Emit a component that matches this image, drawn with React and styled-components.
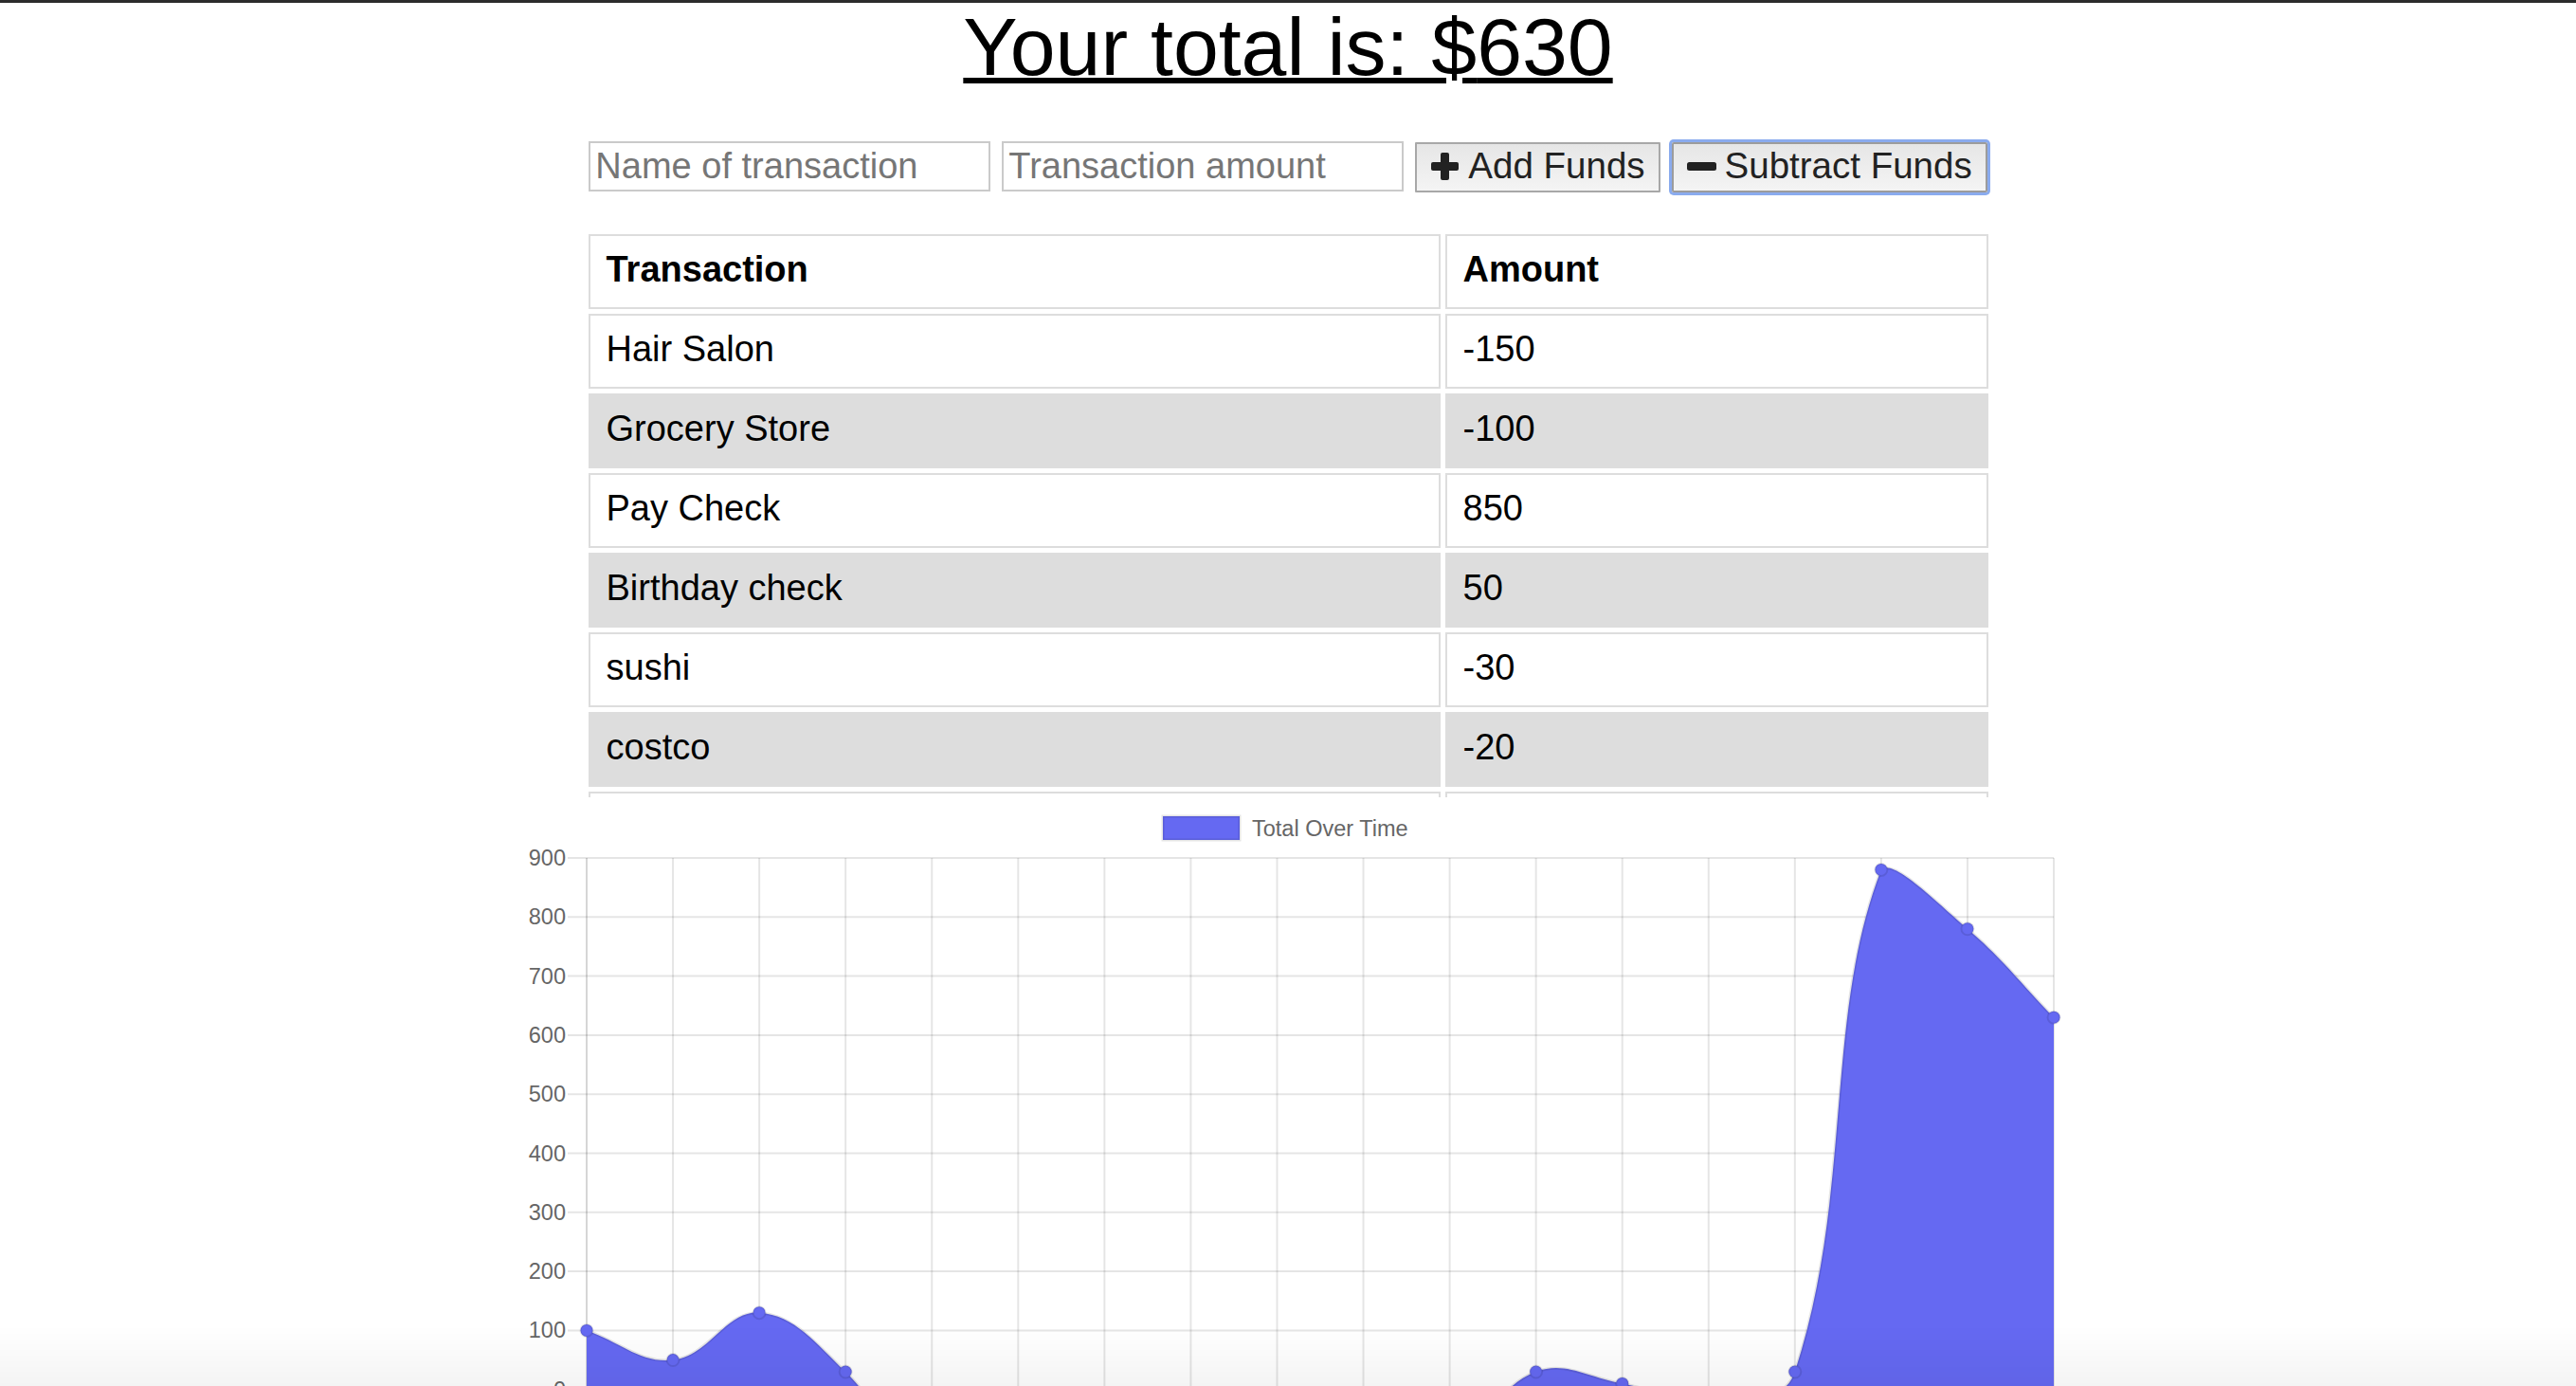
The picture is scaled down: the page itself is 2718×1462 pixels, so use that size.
import React from "react";
import styled, { createGlobalStyle, css } from "styled-components";

// Transactions, newest first (same order the table shows them)
const transactions = [
  { name: "Hair Salon", value: -150 },
  { name: "Grocery Store", value: -100 },
  { name: "Pay Check", value: 850 },
  { name: "Birthday check", value: 50 },
  { name: "sushi", value: -30 },
  { name: "costco", value: -20 },
  { name: "refund", value: 130 },
  { name: "cash back", value: 40 },
  { name: "dinner", value: -50 },
  { name: "tutoring", value: 90 },
  { name: "gift", value: 20 },
  { name: "shoes", value: -80 },
  { name: "sold books", value: 30 },
  { name: "car repair", value: -180 },
  { name: "electric bill", value: -100 },
  { name: "side job", value: 80 },
  { name: "movies", value: -50 },
  { name: "deposit", value: 100 },
];

const total = transactions.reduce((sum, t) => sum + t.value, 0);

// running totals, oldest first, for the chart
const runningTotals = [...transactions].reverse().reduce((acc, t) => {
  const prev = acc.length ? acc[acc.length - 1] : 0;
  acc.push(prev + t.value);
  return acc;
}, []);

// chart geometry (svg coordinates)
const chart = {
  width: 1640,
  height: 621,
  left: 80,
  right: 1628,
  top: 64,
  max: 900,
  perUnit: 0.623,
};
const yOf = (v) => chart.top + (chart.max - v) * chart.perUnit;
const area = { left: chart.left, right: chart.right, top: chart.top, bottom: yOf(-300) };

const FONT = `"Liberation Sans", Arial, Helvetica, sans-serif`;

const GlobalStyle = createGlobalStyle`
  html, body {
    margin: 0;
    padding: 0;
    background: #fff;
    overflow: hidden;
  }
  body {
    font-family: ${FONT};
    color: #000;
  }
`;

const TopEdge = styled.div`
  position: fixed;
  top: 0;
  left: 0;
  right: 0;
  height: 3px;
  background: #2c2c2c;
  z-index: 2;
`;

const BottomShade = styled.div`
  position: fixed;
  left: 0;
  right: 0;
  bottom: 0;
  height: 64px;
  background: linear-gradient(rgba(0, 0, 0, 0), rgba(0, 0, 0, 0.045));
  pointer-events: none;
  z-index: 2;
`;

const Page = styled.div`
  height: 100vh;
  overflow: hidden;
`;

const Title = styled.h1`
  margin: 0;
  text-align: center;
  font-family: ${FONT};
  font-size: 86px;
  font-weight: normal;
  line-height: 98px;
  text-decoration: underline;
  text-decoration-thickness: 6px;
`;

const EntryForm = styled.div`
  display: flex;
  justify-content: center;
  align-items: flex-start;
  gap: 12px;
  margin-top: 51px;
`;

const TextField = styled.input`
  box-sizing: border-box;
  width: 424px;
  height: 53px;
  padding: 0 5px;
  border: 2px solid #cacaca;
  font-family: ${FONT};
  font-size: 38px;
  color: #000;
  outline: none;

  &::placeholder {
    color: #767676;
  }
`;

const FundsButton = styled.button`
  box-sizing: border-box;
  display: inline-flex;
  align-items: center;
  gap: 9px;
  height: 53px;
  margin-top: 1px;
  padding: 0 14px 3px 14px;
  border: 2px solid #a8a8a8;
  border-radius: 1px;
  background: linear-gradient(#e6e6e6, #f4f4f4);
  font-family: ${FONT};
  font-size: 38.5px;
  color: #222;
  cursor: pointer;

  ${(p) =>
    p.$focused &&
    css`
      border-color: #9c9c9c;
      box-shadow: 0 0 0 3px #8aabee;
      border-radius: 2px;
    `}
`;

const Glyph = styled.svg`
  width: 31px;
  height: 31px;
  flex: none;
`;

const TableViewport = styled.div`
  width: 1487px;
  height: 599px;
  margin: 39px auto 0;
  overflow-y: auto;
  scrollbar-width: none;

  &::-webkit-scrollbar {
    display: none;
  }
`;

const Ledger = styled.table`
  width: 100%;
  table-layout: fixed;
  border-collapse: separate;
  border-spacing: 5px;
  font-family: ${FONT};
  font-size: 38px;
`;

const cellBase = css`
  box-sizing: border-box;
  padding: 13px 17px 18px;
  line-height: 44px;
  text-align: left;
  border: 2px solid #dddddd;
  white-space: nowrap;
`;

const HeadCell = styled.th`
  ${cellBase}
  font-weight: bold;

  &:first-child {
    width: 899px;
  }
`;

const Cell = styled.td`
  ${cellBase}
`;

const LedgerRow = styled.tr`
  background: ${(p) => (p.$shaded ? "#dddddd" : "#ffffff")};
`;

const ChartSvg = styled.svg`
  display: block;
  margin: 0 auto;
  overflow: hidden;
`;

const AxisLabel = styled.text`
  font-family: ${FONT};
  font-size: 23.5px;
  fill: #666666;
`;

const PlusIcon = () => (
  <Glyph viewBox="0 0 31 31">
    <rect x="11" y="1" width="9" height="29" rx="2" fill="#222" />
    <rect x="1" y="11" width="29" height="9" rx="2" fill="#222" />
  </Glyph>
);

const MinusIcon = () => (
  <Glyph viewBox="0 0 31 31">
    <rect x="0" y="11" width="31" height="9" rx="2.5" fill="#222" />
  </Glyph>
);

// Chart.js style spline control points, capped to the chart area
function buildCurve(points, tension) {
  const cap = (v, lo, hi) => Math.max(lo, Math.min(hi, v));
  const ctrl = points.map((cur, i) => {
    const prev = points[i - 1] || cur;
    const next = points[i + 1] || cur;
    const d01 = Math.hypot(cur.x - prev.x, cur.y - prev.y);
    const d12 = Math.hypot(next.x - cur.x, next.y - cur.y);
    const sum = d01 + d12;
    const fa = tension * (sum ? d01 / sum : 0);
    const fb = tension * (sum ? d12 / sum : 0);
    return {
      inX: cap(cur.x - fa * (next.x - prev.x), area.left, area.right),
      inY: cap(cur.y - fa * (next.y - prev.y), area.top, area.bottom),
      outX: cap(cur.x + fb * (next.x - prev.x), area.left, area.right),
      outY: cap(cur.y + fb * (next.y - prev.y), area.top, area.bottom),
    };
  });

  let d = `M${points[0].x},${points[0].y}`;
  for (let i = 1; i < points.length; i++) {
    const a = ctrl[i - 1];
    const b = ctrl[i];
    d += ` C${a.outX},${a.outY} ${b.inX},${b.inY} ${points[i].x},${points[i].y}`;
  }
  return d;
}

const TotalChart = ({ data }) => {
  const step = (chart.right - chart.left) / (data.length - 1);
  const points = data.map((v, i) => ({ x: chart.left + i * step, y: yOf(v) }));
  const line = buildCurve(points, 0.4);
  const zeroY = yOf(0);
  const fill = `${line} L${points[points.length - 1].x},${zeroY} L${points[0].x},${zeroY} Z`;
  const ticks = [900, 800, 700, 600, 500, 400, 300, 200, 100, 0];
  const grid = "rgba(0,0,0,0.1)";
  const blue = "#6569F2";

  return (
    <ChartSvg width={chart.width} height={chart.height} viewBox={`0 0 ${chart.width} ${chart.height}`}>
      {/* legend */}
      <rect x="688" y="20" width="81" height="25" fill={blue} stroke={grid} strokeWidth="3" />
      <AxisLabel x="782" y="41">Total Over Time</AxisLabel>

      {/* grid */}
      {ticks.map((t) => (
        <g key={t}>
          <line x1="60" x2={chart.right} y1={yOf(t)} y2={yOf(t)} stroke={grid} strokeWidth="2" />
          <AxisLabel x="58" y={yOf(t) + 8} textAnchor="end">
            {t}
          </AxisLabel>
        </g>
      ))}
      {points.map((p, i) => (
        <line
          key={i}
          x1={p.x}
          x2={p.x}
          y1={chart.top}
          y2={chart.height}
          stroke={i === 0 ? "rgba(0,0,0,0.16)" : grid}
          strokeWidth="2"
        />
      ))}

      {/* data */}
      <path d={fill} fill={blue} />
      <path d={line} fill="none" stroke={grid} strokeWidth="3" />
      {points.map((p, i) => (
        <circle key={i} cx={p.x} cy={p.y} r="6.5" fill={blue} stroke={grid} strokeWidth="2" />
      ))}
    </ChartSvg>
  );
};

const App = () => (
  <>
    <GlobalStyle />
    <TopEdge />
    <Page>
      <Title>Your total is: ${total}</Title>

      <EntryForm>
        <TextField type="text" placeholder="Name of transaction" />
        <TextField type="number" placeholder="Transaction amount" />
        <FundsButton>
          <PlusIcon />
          Add Funds
        </FundsButton>
        <FundsButton $focused>
          <MinusIcon />
          Subtract Funds
        </FundsButton>
      </EntryForm>

      <TableViewport>
        <Ledger>
          <thead>
            <tr>
              <HeadCell>Transaction</HeadCell>
              <HeadCell>Amount</HeadCell>
            </tr>
          </thead>
          <tbody>
            {transactions.map((t, i) => (
              <LedgerRow key={i} $shaded={i % 2 === 1}>
                <Cell>{t.name}</Cell>
                <Cell>{t.value}</Cell>
              </LedgerRow>
            ))}
          </tbody>
        </Ledger>
      </TableViewport>

      <TotalChart data={runningTotals} />
    </Page>
    <BottomShade />
  </>
);

export default App;
